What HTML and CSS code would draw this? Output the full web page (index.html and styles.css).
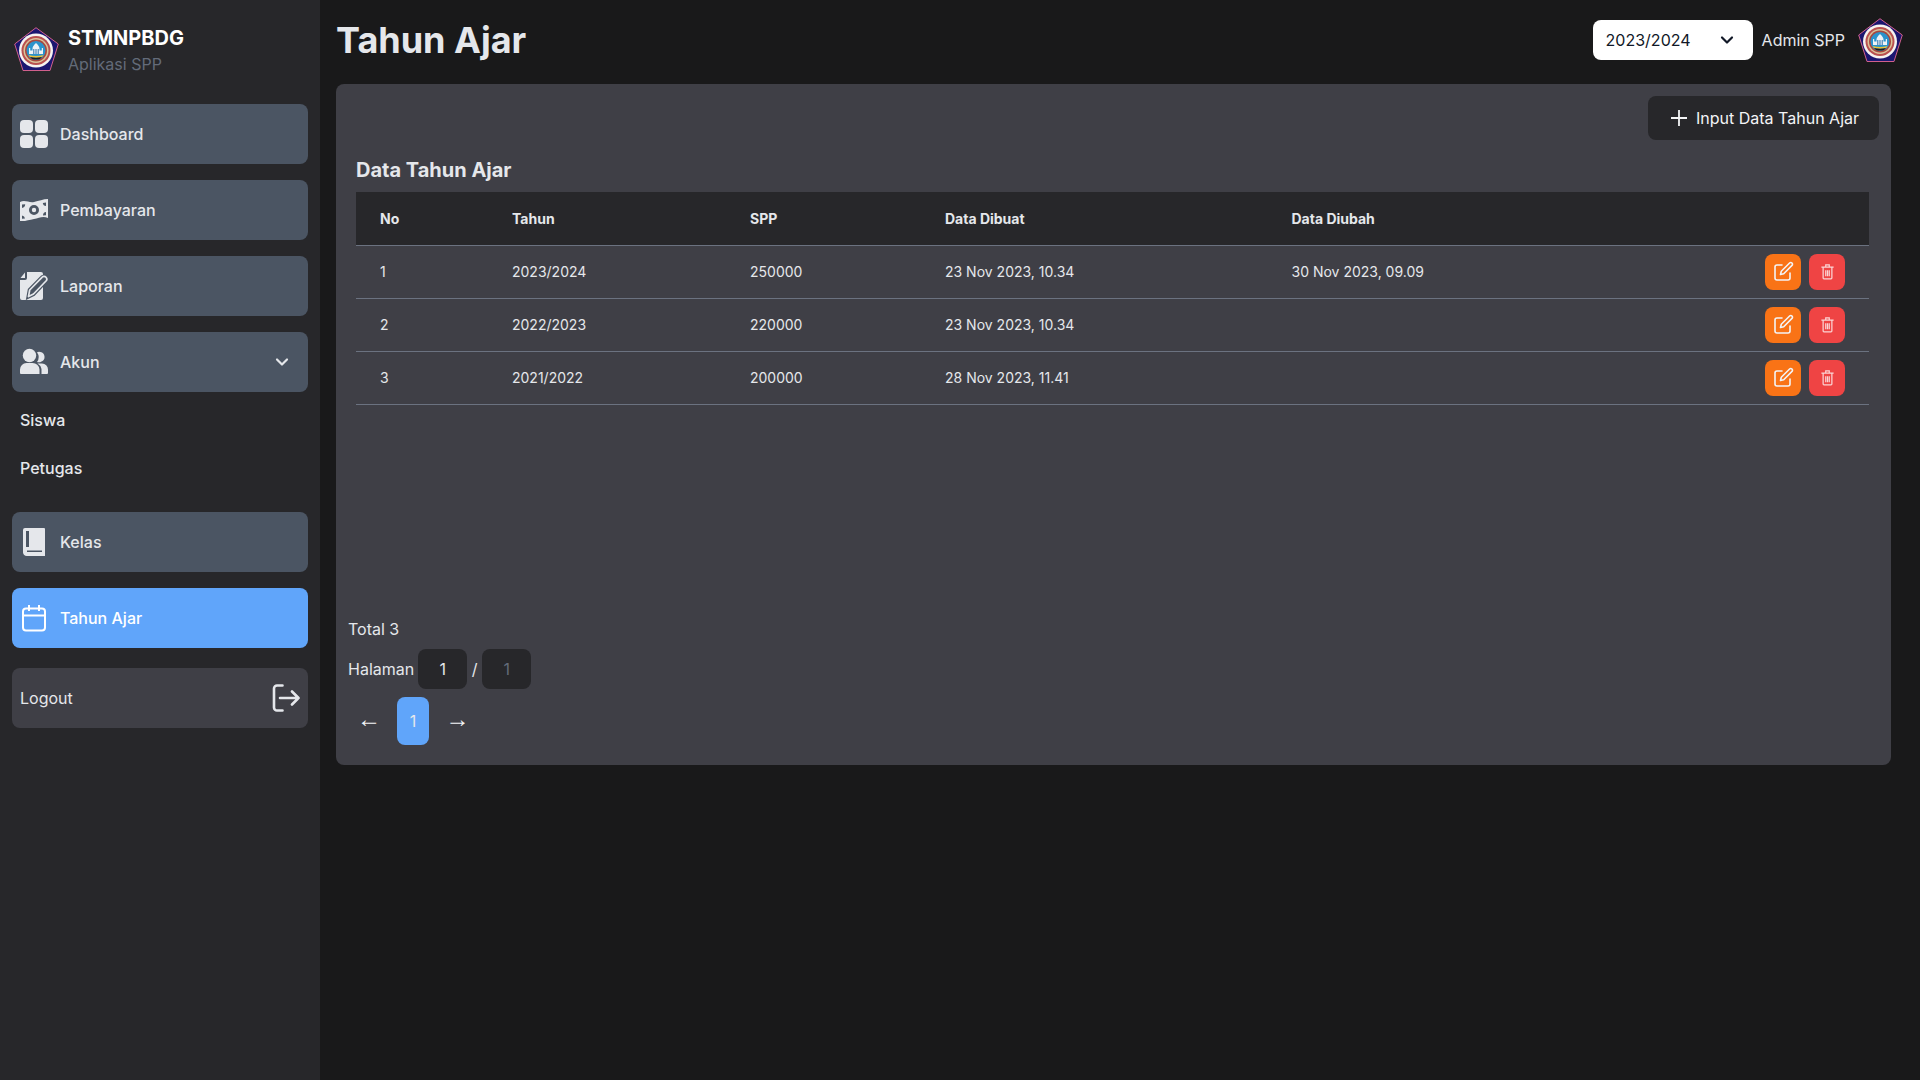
FILE: index.html
```html
<!DOCTYPE html>
<html lang="en">
<head>
    <meta charset="UTF-8">
    <title>Tahun Ajar</title>
    <link rel="stylesheet" href="styles.css">
</head>
<body>
    <svg class="defs" width="0" height="0">
        <symbol id="logo" viewBox="0 0 45 45">
            <path d="M22 .7 L44.300 17 L36 43.500 H9 L.7 17 Z" fill="#1b1670" stroke="#d0608c" stroke-width="1"/>
            <circle cx="22" cy="23.500" r="17" fill="#f6f3f0"/>
            <circle cx="22" cy="23.500" r="14.500" fill="#b9504f"/>
            <circle cx="22" cy="23.500" r="12.500" fill="#d9c39a"/>
            <circle cx="22" cy="23.500" r="11" fill="#a8483f"/>
            <circle cx="22" cy="23.500" r="9.500" fill="#2b93cc"/>
            <path d="M15 27 V21 H16.200 V23.500 H18.500 V21.500 Q18.500 19 22 16 Q25.500 19 25.500 21.500 V23.500 H27.800 V21 H29 V27 Z" fill="#eef2f6"/>
            <path d="M19.300 27 V22 H20.300 V27 Z M23.700 27 V22 H24.700 V27 Z M21.500 27 V22 H22.500 V27 Z" fill="#2b6fa8"/>
            <path d="M14.500 28 Q22 30 29.500 28 L28 30 Q22 31.500 16 30 Z" fill="#e8c23a"/>
            <path d="M16 30 Q22 31.500 28 30 L26 32 Q22 33 18 32 Z" fill="#221a1a"/>
        </symbol>
        <symbol id="edit" viewBox="0 0 24 24">
            <path d="M11 5H6a2 2 0 0 0-2 2v11a2 2 0 0 0 2 2h11a2 2 0 0 0 2-2v-5" fill="none" stroke="currentColor" stroke-width="1.600" stroke-linecap="round"/>
            <path d="M9.500 14.500l.8-3.200L18.600 3a1.600 1.600 0 0 1 2.300 0l.1.1a1.600 1.600 0 0 1 0 2.300l-8.300 8.300z" fill="none" stroke="currentColor" stroke-width="1.600" stroke-linejoin="round"/>
        </symbol>
        <symbol id="trash" viewBox="0 0 24 24">
            <path d="M5 7h14M10 7V4.500h4V7M7 7v12.500a1 1 0 0 0 1 1h8a1 1 0 0 0 1-1V7M10 10.500v7M12 10.500v7M14 10.500v7" fill="none" stroke="currentColor" stroke-width="1.400"/>
        </symbol>
    </svg>

    <!-- Sidebar -->
    <aside class="sidebar">
        <div class="brand">
            <svg class="logo"><use href="#logo"/></svg>
            <div class="brand-text">
                <div class="brand-name">STMNPBDG</div>
                <div class="brand-sub">Aplikasi SPP</div>
            </div>
        </div>
        <nav class="menu">
            <a class="menu-item">
                <svg class="menu-icon" viewBox="0 0 28 28" fill="currentColor"><rect width="13" height="13" rx="4"/><rect x="15" width="13" height="13" rx="4"/><rect y="15" width="13" height="13" rx="4"/><rect x="15" y="15" width="13" height="13" rx="4"/></svg>
                <span>Dashboard</span>
            </a>
            <a class="menu-item">
                <svg class="menu-icon" viewBox="0 0 28 28" fill="currentColor"><path fill-rule="evenodd" d="M0 6C5 3.500 9 7 14 6S23 3 28 3V22C23 19.500 19 22 14 23S5 25.500 0 25ZM14 9a5 5 0 1 0 0 10a5 5 0 0 0 0-10ZM14 11.800a2.200 2.200 0 1 1 0 4.400a2.200 2.200 0 0 1 0-4.400ZM2 8.500V12a4 4 0 0 0 3.200-3.800ZM26 6.500 22.800 7A3.500 3.500 0 0 0 26 10ZM2 19.500V22.800L5 22.500A3.500 3.500 0 0 0 2 19.500ZM26 16a3.500 3.500 0 0 0-3 3.400L26 19.300Z"/></svg>
                <span>Pembayaran</span>
            </a>
            <a class="menu-item">
                <svg class="menu-icon" viewBox="0 0 28 28" fill="currentColor"><path d="M7 0H21a2 2 0 0 1 2 2V26a2 2 0 0 1-2 2H2a2 2 0 0 1-2-2V8H5a2 2 0 0 0 2-2Z"/><path d="M5 .5V6H.5Z"/><path d="M8.500 24.500l1.200-6.500L22 5.300a2.700 2.700 0 0 1 4 0a2.700 2.700 0 0 1 0 3.700L13.500 22Z" fill="#4b5563" stroke="#4b5563" stroke-width="4"/><path d="M8.500 24.500l1.200-6.500L22 5.300a2.700 2.700 0 0 1 4 0a2.700 2.700 0 0 1 0 3.700L13.500 22Z" fill="#4b5563" stroke="currentColor" stroke-width="1.700" stroke-linejoin="round"/></svg>
                <span>Laporan</span>
            </a>
            <a class="menu-item">
                <svg class="menu-icon" viewBox="0 0 28 28" fill="currentColor"><circle cx="9.500" cy="7.500" r="6.700"/><path d="M0 25v-3.500a6.500 6.500 0 0 1 6.500-6.500h6a7 7 0 0 1 7 6.500V26H1a1 1 0 0 1-1-1Z"/><path d="M17 4.200a5 5 0 0 1 3.500-.2 5 5 0 0 1 1 9.500 5 5 0 0 1-4.500.5 8.500 8.500 0 0 0 0-9.800ZM17.500 15.500H22a6 6 0 0 1 6 6V25a1 1 0 0 1-1 1h-5.500v-5a8 8 0 0 0-4-5.500Z"/></svg>
                <span>Akun</span>
                <svg class="menu-chevron" viewBox="0 0 14 10"><path d="M2 2.500l5 5 5-5" fill="none" stroke="currentColor" stroke-width="2.200" stroke-linecap="round" stroke-linejoin="round"/></svg>
            </a>
            <div class="submenu">
                <a class="submenu-item">Siswa</a>
                <a class="submenu-item">Petugas</a>
            </div>
            <a class="menu-item">
                <svg class="menu-icon" viewBox="0 0 28 28" fill="currentColor"><path fill-rule="evenodd" d="M5 0H24a1 1 0 0 1 1 1V28H7A4 4 0 0 1 3 24.500V2A2 2 0 0 1 5 0ZM6 3V19H9V3ZM7 22.500V24H22V22.500Z"/></svg>
                <span>Kelas</span>
            </a>
            <a class="menu-item active">
                <svg class="menu-icon" viewBox="0 0 28 28" fill="none" stroke="currentColor" stroke-width="2"><rect x="3" y="4.500" width="22" height="22" rx="3"/><path d="M3 11.500H25M9 1V7M19 1V7"/></svg>
                <span>Tahun Ajar</span>
            </a>
            <a class="menu-item logout">
                <span>Logout</span>
                <svg class="menu-icon" viewBox="0 0 28 28" fill="none" stroke="currentColor" stroke-width="2.600" stroke-linecap="round" stroke-linejoin="round"><path d="M10.500 1.500H5A3 3 0 0 0 2 4.500v19a3 3 0 0 0 3 3h5.500M8 14H26.500M20 7.500L26.500 14L20 20.500"/></svg>
            </a>
        </nav>
    </aside>

    <!-- Main content -->
    <main class="main">
        <header class="topbar">
            <h1>Tahun Ajar</h1>
            <div class="topbar-right">
                <div class="year-select">
                    <span>2023/2024</span>
                    <svg viewBox="0 0 14 10"><path d="M2 2.500l5 5 5-5" fill="none" stroke="currentColor" stroke-width="2.200" stroke-linecap="round" stroke-linejoin="round"/></svg>
                </div>
                <span class="user-name">Admin SPP</span>
                <svg class="logo"><use href="#logo"/></svg>
            </div>
        </header>

        <section class="card">
            <div class="card-actions">
                <button class="btn-add">
                    <svg viewBox="0 0 18 18"><path d="M9 1V17M1 9H17" fill="none" stroke="currentColor" stroke-width="1.800"/></svg>
                    Input Data Tahun Ajar
                </button>
            </div>
            <h2>Data Tahun Ajar</h2>
            <div class="table-wrap">
                <table>
                    <colgroup>
                        <col class="col-no"><col class="col-year"><col class="col-spp"><col class="col-created"><col class="col-updated"><col>
                    </colgroup>
                    <thead>
                        <tr><th>No</th><th>Tahun</th><th>SPP</th><th>Data Dibuat</th><th>Data Diubah</th><th></th></tr>
                    </thead>
                    <tbody>
                        <tr>
                            <td>1</td><td>2023/2024</td><td>250000</td><td>23 Nov 2023, 10.34</td><td>30 Nov 2023, 09.09</td>
                            <td><div class="actions"><a class="btn-icon edit"><svg><use href="#edit"/></svg></a><a class="btn-icon delete"><svg><use href="#trash"/></svg></a></div></td>
                        </tr>
                        <tr>
                            <td>2</td><td>2022/2023</td><td>220000</td><td>23 Nov 2023, 10.34</td><td></td>
                            <td><div class="actions"><a class="btn-icon edit"><svg><use href="#edit"/></svg></a><a class="btn-icon delete"><svg><use href="#trash"/></svg></a></div></td>
                        </tr>
                        <tr>
                            <td>3</td><td>2021/2022</td><td>200000</td><td>28 Nov 2023, 11.41</td><td></td>
                            <td><div class="actions"><a class="btn-icon edit"><svg><use href="#edit"/></svg></a><a class="btn-icon delete"><svg><use href="#trash"/></svg></a></div></td>
                        </tr>
                    </tbody>
                </table>
            </div>
            <div class="pagination">
                <div class="total">Total 3</div>
                <div class="page-info">
                    <span>Halaman</span>
                    <span class="page-box">1</span>
                    <span class="page-sep">/</span>
                    <span class="page-box muted">1</span>
                </div>
                <div class="pager">
                    <a class="pager-arrow prev">←</a>
                    <a class="pager-current">1</a>
                    <a class="pager-arrow next">→</a>
                </div>
            </div>
        </section>
    </main>
</body>
</html>
```

FILE: styles.css
```css
/* General Styles */
* {
    box-sizing: border-box;
}

body {
    font-family: 'Inter', 'Liberation Sans', sans-serif;
    margin: 0;
    height: 100vh;
    display: flex;
    overflow: hidden;
    background: #19191a;
    color: #e5e7eb;
    font-size: 16px;
}

.defs {
    position: absolute;
}

.logo {
    width: 45px;
    height: 45px;
    flex-shrink: 0;
}

/* Sidebar */
.sidebar {
    width: 320px;
    flex-shrink: 0;
    background: #27272a;
    padding: 27px 12px 0;
}

.brand {
    display: flex;
    align-items: center;
    gap: 9px;
    padding-left: 2px;
    height: 45px;
}

.brand-text {
    padding-top: 2px;
}

.brand-name {
    font-size: 20px;
    font-weight: 700;
    line-height: 26px;
    color: #fff;
}

.brand-sub {
    color: #636b79;
    line-height: 26px;
}

.menu {
    margin-top: 32px;
    display: flex;
    flex-direction: column;
    gap: 16px;
}

.menu-item {
    height: 60px;
    display: flex;
    align-items: center;
    gap: 12px;
    padding: 0 8px;
    background: #4b5563;
    border-radius: 8px;
    font-weight: 500;
}

.menu-item.active {
    background: #60a5fa;
    color: #fff;
}

.menu-item.logout {
    justify-content: space-between;
    margin-top: 4px;
    background: #3f3f46;
    font-weight: 400;
}

.menu-icon {
    width: 28px;
    height: 28px;
    flex-shrink: 0;
}

.menu-chevron {
    width: 14px;
    height: 10px;
    margin-left: auto;
    margin-right: 11px;
}

.submenu {
    margin-top: -12px;
    padding-bottom: 4px;
    display: flex;
    flex-direction: column;
}

.submenu-item {
    height: 48px;
    display: flex;
    align-items: center;
    padding: 0 8px;
    font-weight: 500;
}

/* Main */
.main {
    flex: 1;
    min-width: 0;
    padding: 0 0 0 16px;
}

.topbar {
    height: 84px;
    padding: 0 17px 4px 0;
    display: flex;
    align-items: center;
    justify-content: space-between;
}

h1 {
    margin: 0;
    font-size: 36px;
    font-weight: 700;
}

.topbar-right {
    display: flex;
    align-items: center;
}

.year-select {
    width: 160px;
    height: 40px;
    padding: 0 19px 0 13px;
    display: flex;
    align-items: center;
    justify-content: space-between;
    background: #fff;
    border-radius: 8px;
    color: #111827;
}

.year-select svg {
    width: 14px;
    height: 10px;
}

.user-name {
    margin: 0 13px 0 9px;
}

/* Card */
.card {
    width: 1555px;
    height: 681px;
    padding: 12px 12px 0;
    background: #3f3f46;
    border-radius: 8px;
}

.card-actions {
    display: flex;
    justify-content: flex-end;
}

.btn-add {
    width: 231px;
    height: 44px;
    padding: 0 0 0 22px;
    display: flex;
    align-items: center;
    gap: 8px;
    border: none;
    border-radius: 8px;
    background: #27272a;
    color: #f3f4f6;
    font: inherit;
}

.btn-add svg {
    width: 18px;
    height: 18px;
}

h2 {
    margin: 20px 0 0 8px;
    font-size: 20px;
    font-weight: 700;
    line-height: 21px;
}

.table-wrap {
    margin: 11px 10px 0 8px;
    height: 421px;
}

table {
    width: 100%;
    border-collapse: collapse;
    table-layout: fixed;
    font-size: 14px;
}

.col-no { width: 132px; }
.col-year { width: 238px; }
.col-spp { width: 195px; }
.col-created { width: 346.5px; }
.col-updated { width: 299.5px; }

th {
    height: 53px;
    padding: 0 24px;
    text-align: left;
    font-weight: 700;
    font-size: 14px;
    background: #27272a;
    border-bottom: 1px solid #6b7280;
}

td {
    height: 53px;
    padding: 0 24px;
    border-bottom: 1px solid #6b7280;
}

.actions {
    display: flex;
    justify-content: flex-end;
    gap: 8px;
}

.btn-icon {
    width: 36px;
    height: 36px;
    display: flex;
    align-items: center;
    justify-content: center;
    border-radius: 8px;
    color: #f3f4f6;
}

.btn-icon svg {
    width: 24px;
    height: 24px;
}

.btn-icon.edit {
    background: #f97316;
}

.btn-icon.delete {
    background: #ef4444;
}

.btn-icon.delete svg {
    width: 21px;
    height: 21px;
    color: #fbd5d5;
}

/* Pagination */
.pagination {
    padding-top: 4px;
}

.total {
    line-height: 24px;
}

.page-info {
    margin-top: 8px;
    display: flex;
    align-items: center;
}

.page-box {
    width: 49px;
    height: 40px;
    margin-left: 4px;
    display: flex;
    align-items: center;
    justify-content: center;
    background: #27272a;
    border-radius: 8px;
}

.page-box.muted {
    margin-left: 0;
    color: #636b79;
}

.page-sep {
    width: 15px;
    text-align: center;
}

.pager {
    margin-top: 8px;
    display: flex;
    align-items: center;
}

.pager-arrow {
    width: 49px;
    padding-bottom: 4px;
    text-align: center;
    font-family: 'Liberation Sans', sans-serif;
    font-size: 24px;
    line-height: 1;
    color: #f3f4f6;
}

.pager-arrow.prev {
    padding-right: 7px;
}

.pager-arrow.next {
    padding-left: 8px;
}

.pager-current {
    width: 32px;
    height: 48px;
    display: flex;
    align-items: center;
    justify-content: center;
    background: #60a5fa;
    border-radius: 8px;
    color: #e5e7eb;
}
```
